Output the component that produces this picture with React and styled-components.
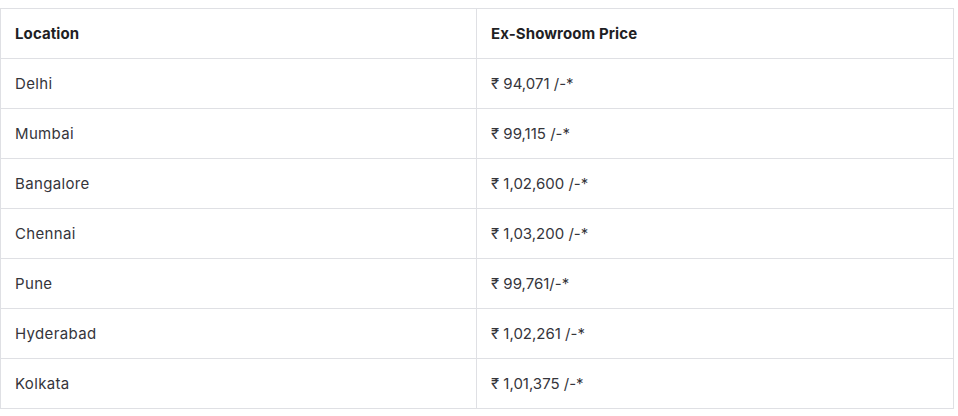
import styled, { createGlobalStyle } from 'styled-components'

const GlobalStyle = createGlobalStyle`
    body{
        margin:0;
        padding-top:8px;
        background:#fff;
        font-family: Inter, "Noto Sans", sans-serif;
    }
`

const prices = [
    { city: 'Delhi', price: '₹ 94,071 /-*' },
    { city: 'Mumbai', price: '₹ 99,115 /-*' },
    { city: 'Bangalore', price: '₹ 1,02,600 /-*' },
    { city: 'Chennai', price: '₹ 1,03,200 /-*' },
    { city: 'Pune', price: '₹ 99,761/-*' },
    { city: 'Hyderabad', price: '₹ 1,02,261 /-*' },
    { city: 'Kolkata', price: '₹ 1,01,375 /-*' },
]

export default function App() {
    return (
        <>
            <GlobalStyle />
            <PriceTable>
                <colgroup>
                    <col style={{ width: 476 }} />
                    <col />
                </colgroup>
                <thead>
                    <tr>
                        <HeadCell>Location</HeadCell>
                        <HeadCell>Ex-Showroom Price</HeadCell>
                    </tr>
                </thead>
                <tbody>
                    {prices.map(p => (
                        <tr key={p.city}>
                            <Cell $spacing=".35px">{p.city}</Cell>
                            <Cell>{p.price}</Cell>
                        </tr>
                    ))}
                </tbody>
            </PriceTable>
        </>
    )
}

const PriceTable = styled.table`
    width:954px;
    border-collapse: collapse;
    table-layout: fixed;
`
const Cell = styled.td`
    height:50px;
    box-sizing: border-box;
    padding: 0 14px;
    border: 1px solid #dfe0e4;
    font-size: 15px;
    color: #35353b;
    text-align: left;
    vertical-align: middle;
    letter-spacing: ${p => p.$spacing || '0'};
`
const HeadCell = styled(Cell).attrs({ as: 'th' })`
    font-weight: 700;
    color: #1f1f24;
    letter-spacing: .1px;
`
